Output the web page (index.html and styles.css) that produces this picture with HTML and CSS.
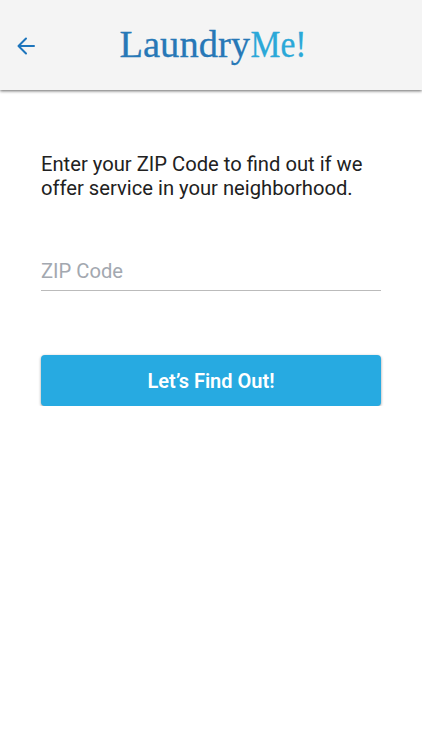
FILE: index.html
```html
<!DOCTYPE html>
<html lang="en">
<head>
    <meta charset="UTF-8">
    <meta name="viewport" content="width=device-width, initial-scale=1.0">
    <title>LaundryMe!</title>
    <link rel="stylesheet" href="styles.css">
</head>
<body>

<header class="header">
    <a href="#" class="back" aria-label="Back">
        <svg width="18" height="18" viewBox="0 0 18 18" fill="none" stroke="#1d75bc" stroke-width="2" stroke-linecap="round" stroke-linejoin="round">
            <path d="M17 9H2M9 1.5L1.5 9L9 16.5" />
        </svg>
    </a>
    <svg class="logo" width="220" height="60" viewBox="0 0 220 60">
        <text class="laundry" x="1.5" y="41" textLength="130.5" lengthAdjust="spacingAndGlyphs">Laundry</text>
        <text class="me" x="132.5" y="41" textLength="56" lengthAdjust="spacingAndGlyphs">Me!</text>
    </svg>
</header>

<main class="content">
    <p class="intro">Enter your ZIP Code to find out if we offer service in your neighborhood.</p>
    <form>
        <input type="text" class="zip" placeholder="ZIP Code" aria-label="ZIP Code">
        <button type="button" class="submit">Let’s Find Out!</button>
    </form>
</main>

</body>
</html>
```
FILE: styles.css
```css
* {
    box-sizing: border-box;
}
body {
    margin: 0;
    font-family: Roboto, sans-serif;
    background-color: #fff;
    color: #212121;
}
.header {
    display: flex;
    align-items: center;
    height: 90px;
    padding: 2px 17px 0;
    background-color: #f4f4f4;
    box-shadow: 0 1px 3px rgba(0, 0, 0, 0.6);
}
.back {
    display: flex;
    width: 18px;
}
.logo {
    margin-left: 83px;
    font-family: "Liberation Serif", serif;
    font-size: 38.5px;
    stroke-width: 0.3px;
}
.laundry {
    fill: #2778b7;
    stroke: #2778b7;
}
.me {
    fill: #2ba8d8;
    stroke: #2ba8d8;
}
.content {
    padding: 62px 41px 0;
}
.intro {
    margin: 0 -1px 0 0;
    font-size: 20.2px;
    line-height: 24px;
}
.zip {
    display: block;
    width: 100%;
    height: 40px;
    margin-top: 51px;
    padding: 0;
    border: none;
    border-bottom: 1px solid #bbb;
    font-family: inherit;
    font-size: 20.2px;
    outline: none;
}
.zip::placeholder {
    color: #a3a8b0;
}
.submit {
    display: block;
    width: 100%;
    height: 51px;
    margin-top: 64px;
    border: none;
    border-radius: 4px;
    background-color: #27aae1;
    box-shadow: 0 1px 3px rgba(0, 0, 0, 0.4);
    color: #fff;
    font-family: inherit;
    font-size: 20px;
    font-weight: 600;
}
```
